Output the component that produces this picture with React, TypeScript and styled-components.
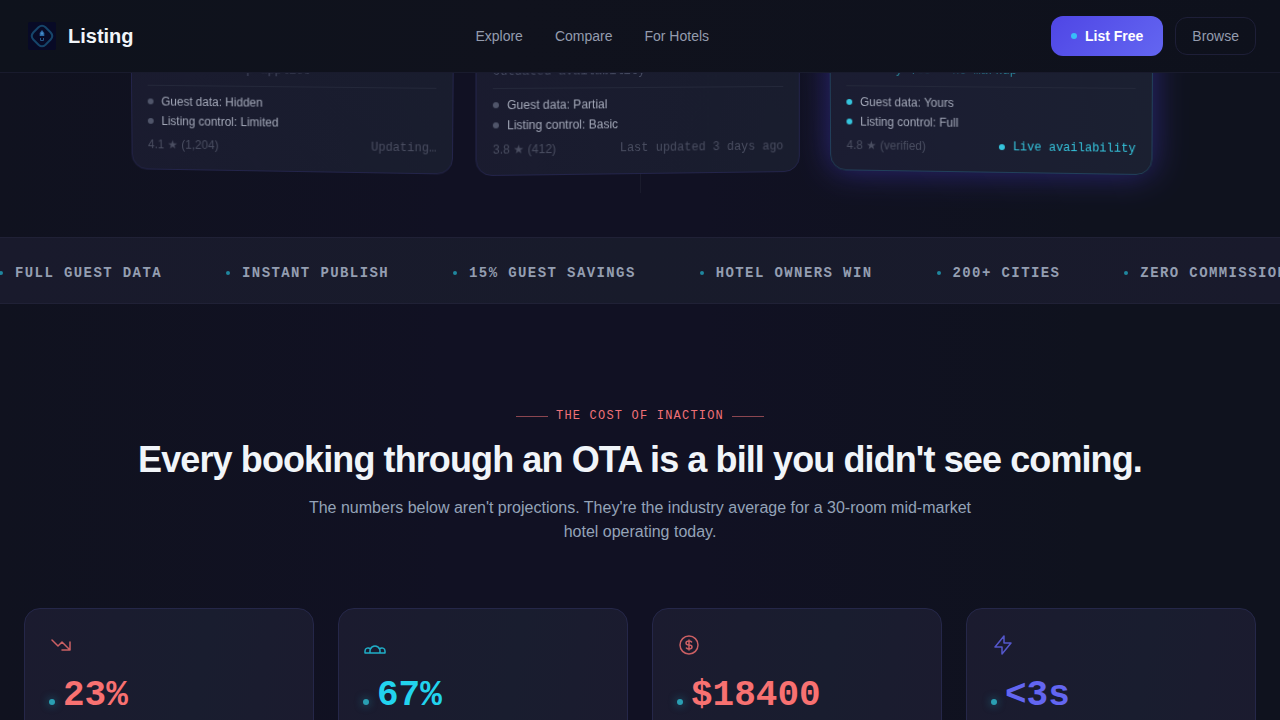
import React from "react";
import styled, { createGlobalStyle } from "styled-components";

const mono = `"Liberation Mono", monospace`;

const GlobalStyle = createGlobalStyle`
  *, *::before, *::after { box-sizing: border-box; }
  body {
    margin: 0;
    background: #101120;
    color: #f1f5f9;
    font-family: "Liberation Sans", Arial, sans-serif;
    -webkit-font-smoothing: antialiased;
  }
  h1, h2, p, ul, dl, dd { margin: 0; padding: 0; }
  ul { list-style: none; }
  a { color: inherit; text-decoration: none; }
`;

const Page = styled.div`
  height: 100vh;
  overflow: hidden;
  background: linear-gradient(90deg, #10121f 0%, #111123 35%, #111123 55%, #0f121e 85%, #0f121e 100%);
`;

const Header = styled.header`
  position: sticky;
  top: 0;
  z-index: 2;
  display: flex;
  align-items: center;
  justify-content: space-between;
  height: 73px;
  padding: 0 24px;
  background: linear-gradient(90deg, #0e121c, #10121d 40%, #0e111c);
  border-bottom: 1px solid #191b2d;
`;

const Brand = styled.a`
  display: flex;
  align-items: center;
  gap: 8px;
  font-size: 20px;
  font-weight: 700;
`;

const Nav = styled.nav`
  display: flex;
  gap: 32px;
  font-size: 14px;
  color: #949cae;
`;

const Actions = styled.div`
  display: flex;
  align-items: center;
  gap: 12px;
`;

const Button = styled.button<{ $primary?: boolean }>`
  display: flex;
  align-items: center;
  gap: 8px;
  height: ${(p) => (p.$primary ? 40 : 38)}px;
  padding: ${(p) => (p.$primary ? "0 20px" : "0 16px")};
  border: ${(p) => (p.$primary ? "0" : "1px solid #1e1f38")};
  border-radius: 12px;
  background: ${(p) => (p.$primary ? "linear-gradient(135deg, #4f46e5, #6366f1)" : "transparent")};
  color: ${(p) => (p.$primary ? "#ffffff" : "#949cae")};
  font-family: inherit;
  font-size: 14px;
  font-weight: ${(p) => (p.$primary ? 700 : 400)};
`;

const Dot = styled.span<{ $size?: number; $color: string }>`
  flex: none;
  display: inline-block;
  width: ${(p) => p.$size ?? 6}px;
  height: ${(p) => p.$size ?? 6}px;
  border-radius: 50%;
  background: ${(p) => p.$color};
`;

const Hero = styled.section`
  display: flex;
  flex-direction: column;
  align-items: center;
  justify-content: flex-end;
  height: 164px;
  padding: 0 24px 44px;
  overflow: hidden;
`;

const HeroCards = styled.div`
  flex: none;
  display: grid;
  grid-template-columns: repeat(3, 1fr);
  gap: 24px;
  width: 100%;
  max-width: 1024px;
`;

const ScrollCue = styled.div`
  flex: none;
  width: 1px;
  height: 19px;
  background: #1a1b2c;
`;

const OfferCard = styled.article<{ $tilt: string; $live?: boolean }>`
  display: flex;
  flex-direction: column;
  justify-content: flex-end;
  height: 380px;
  padding: 16px;
  border: 1px solid ${(p) => (p.$live ? "#21405a" : "#23244a")};
  border-radius: 16px;
  outline: 1px solid transparent;
  background: ${(p) => (p.$live ? "linear-gradient(100deg, #1b1c32, #1b2031)" : "linear-gradient(100deg, #1a1b2f, #191d2e)")};
  box-shadow: ${(p) => (p.$live ? "0 0 32px rgba(67, 56, 202, 0.5)" : "none")};
  transform: perspective(1000px) ${(p) => p.$tilt};
  font-size: 12px;
  line-height: 20px;
  color: #a3a8b8;
`;

const RateNote = styled.p<{ $live?: boolean }>`
  padding-bottom: 6px;
  border-bottom: 1px solid #24283a;
  font-family: ${mono};
  color: ${(p) => (p.$live ? "#2b8ca0" : "#454a60")};
`;

const Facts = styled.ul`
  padding: 6px 0 5px;
`;

const Fact = styled.li`
  display: flex;
  align-items: center;
  gap: 8px;
`;

const CardFoot = styled.div`
  display: flex;
  justify-content: space-between;
  line-height: 18px;
  color: #4a4e61;
`;

const Status = styled.span<{ $live?: boolean }>`
  display: flex;
  align-items: center;
  gap: 8px;
  font-family: ${mono};
  color: ${(p) => (p.$live ? "#35c4dc" : "#4a4e61")};
`;

const Ticker = styled.section`
  overflow: hidden;
  padding: 27px 0 22px;
  border-top: 1px solid #202136;
  border-bottom: 1px solid #202136;
  background: linear-gradient(90deg, #191a2c, #181b2b 50%, #191a2c);
`;

const TickerTrack = styled.ul`
  display: flex;
  gap: 64px;
  margin-left: -1px;
`;

const TickerItem = styled.li`
  flex: none;
  display: flex;
  align-items: center;
  gap: 12px;
  font: 700 14px/16px ${mono};
  letter-spacing: 0.1em;
  color: #949eb1;
`;

const Cost = styled.section`
  display: flex;
  flex-direction: column;
  align-items: center;
  padding: 102px 24px 48px;
`;

const Eyebrow = styled.p`
  display: flex;
  align-items: center;
  gap: 8px;
  font: 12px/20px ${mono};
  letter-spacing: 0.1em;
  color: #f07178;

  &::before,
  &::after {
    content: "";
    width: 32px;
    height: 1px;
    background: #8b4650;
  }
`;

const Title = styled.h2`
  margin-top: 12px;
  font-size: 36px;
  line-height: 44px;
  letter-spacing: -0.025em;
  text-align: center;
`;

const Lead = styled.p`
  max-width: 672px;
  margin-top: 14px;
  font-size: 16px;
  line-height: 24px;
  text-align: center;
  color: #94a3b8;
`;

const Stats = styled.div`
  display: grid;
  grid-template-columns: repeat(4, 1fr);
  gap: 24px;
  width: 100%;
  margin-top: 64px;
`;

const StatCard = styled.article`
  padding: 24px;
  border: 1px solid #252749;
  border-radius: 16px;
  background: linear-gradient(100deg, #1b1b2f, #191d2f 60%, #1b1b2f);
`;

const StatIcon = styled.svg`
  display: block;
  width: 24px;
  height: 24px;
  fill: none;
  stroke-width: 1.5;
  stroke-linecap: round;
  stroke-linejoin: round;
  opacity: 0.8;
`;

const StatValue = styled.p<{ $color: string }>`
  display: flex;
  align-items: baseline;
  gap: 8px;
  margin-top: 19px;
  font: 700 36px/40px ${mono};
  color: ${(p) => p.$color};
`;

const GlowDot = styled(Dot)`
  box-shadow: 0 0 8px rgba(34, 211, 238, 0.5);
`;

const LogoMark = () => (
  <svg width="36" height="36" viewBox="0 0 36 36" fill="none" aria-hidden="true">
    <rect x="4" y="4" width="28" height="28" rx="2" fill="#080a26" />
    <path
      d="M14.5 9.3 Q18 6.2 21.5 9.3 L26.7 14.5 Q29.8 18 26.7 21.5 L21.5 26.7 Q18 29.8 14.5 26.7 L9.3 21.5 Q6.2 18 9.3 14.5 Z"
      stroke="#16456a"
      strokeWidth="2"
    />
    <path d="M18 12 L20.3 15 V18 H15.7 V15 Z" fill="#2b68a6" />
    <path d="M16.5 20 V22.5 H19.5 V20" stroke="#235584" strokeWidth="1" />
    <path d="M18 14.5 V16.5" stroke="#6fb4e8" strokeWidth="1" />
  </svg>
);

const offers = [
  {
    tilt: "rotateX(-3deg) rotateY(-4deg)",
    note: "~ 15–25% markup applies",
    facts: ["Guest data: Hidden", "Listing control: Limited"],
    rating: "4.1 ★ (1,204)",
    status: "Updating…",
    live: false,
  },
  {
    tilt: "rotateY(4deg)",
    note: "Outdated availability",
    facts: ["Guest data: Partial", "Listing control: Basic"],
    rating: "3.8 ★ (412)",
    status: "Last updated 3 days ago",
    live: false,
  },
  {
    tilt: "rotateX(-2deg) rotateY(-4deg)",
    note: "Directly $89 — no markup",
    facts: ["Guest data: Yours", "Listing control: Full"],
    rating: "4.8 ★ (verified)",
    status: "Live availability",
    live: true,
  },
];

const tickerItems = [
  "FULL GUEST DATA",
  "INSTANT PUBLISH",
  "15% GUEST SAVINGS",
  "HOTEL OWNERS WIN",
  "200+ CITIES",
  "ZERO COMMISSION",
];

const stats = [
  {
    value: "23%",
    color: "#f87171",
    icon: "M13 17h8m0 0V9m0 8l-8-8-4 4-6-6",
  },
  {
    value: "67%",
    color: "#22d3ee",
    icon: "M17 20h5v-2a3 3 0 00-5.356-1.857M17 20H7m10 0v-2c0-.656-.126-1.283-.356-1.857M7 20H2v-2a3 3 0 015.356-1.857M7 20v-2c0-.656.126-1.283.356-1.857m0 0a5.002 5.002 0 019.288 0",
  },
  {
    value: "$18400",
    color: "#f87171",
    icon: "M12 8c-1.657 0-3 .895-3 2s1.343 2 3 2 3 .895 3 2-1.343 2-3 2m0-8c1.11 0 2.08.402 2.599 1M12 8V7m0 1v8m0 0v1m0-1c-1.11 0-2.08-.402-2.599-1M21 12a9 9 0 11-18 0 9 9 0 0118 0z",
  },
  {
    value: "<3s",
    color: "#6366f1",
    icon: "M13 10V3L4 14h7v7l9-11h-7z",
  },
];

export default function App() {
  return (
    <>
      <GlobalStyle />
      <Page>
        <Header>
          <Brand href="#">
            <LogoMark />
            Listing
          </Brand>
          <Nav>
            <a href="#explore">Explore</a>
            <a href="#compare">Compare</a>
            <a href="#hotels">For Hotels</a>
          </Nav>
          <Actions>
            <Button $primary type="button">
              <Dot $color="#38bdf8" />
              List Free
            </Button>
            <Button type="button">Browse</Button>
          </Actions>
        </Header>
        <main>
          <Hero>
            <HeroCards>
              {offers.map((o) => (
                <OfferCard key={o.status} $tilt={o.tilt} $live={o.live}>
                  <RateNote $live={o.live}>{o.note}</RateNote>
                  <Facts>
                    {o.facts.map((f) => (
                      <Fact key={f}>
                        <Dot $color={o.live ? "#35c4dc" : "#50556a"} />
                        {f}
                      </Fact>
                    ))}
                  </Facts>
                  <CardFoot>
                    <span>{o.rating}</span>
                    <Status $live={o.live}>
                      {o.live && <Dot $color="#35c4dc" />}
                      {o.status}
                    </Status>
                  </CardFoot>
                </OfferCard>
              ))}
            </HeroCards>
            <ScrollCue />
          </Hero>
          <Ticker>
            <TickerTrack>
              {tickerItems.map((t) => (
                <TickerItem key={t}>
                  <Dot $size={4} $color="#1f869e" />
                  {t}
                </TickerItem>
              ))}
            </TickerTrack>
          </Ticker>
          <Cost>
            <Eyebrow>THE COST OF INACTION</Eyebrow>
            <Title>Every booking through an OTA is a bill you didn't see coming.</Title>
            <Lead>
              The numbers below aren't projections. They're the industry average for a 30-room mid-market
              hotel operating today.
            </Lead>
            <Stats>
              {stats.map((s) => (
                <StatCard key={s.value}>
                  <StatIcon viewBox="0 0 24 24" stroke={s.color} aria-hidden="true">
                    <path d={s.icon} />
                  </StatIcon>
                  <StatValue $color={s.color}>
                    <GlowDot $color="#2a9fb2" />
                    {s.value}
                  </StatValue>
                </StatCard>
              ))}
            </Stats>
          </Cost>
        </main>
      </Page>
    </>
  );
}
